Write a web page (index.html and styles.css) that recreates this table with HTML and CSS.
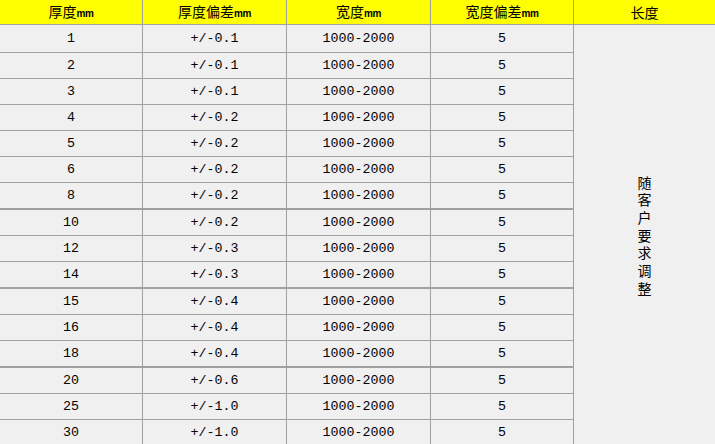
FILE: index.html
```html
<!DOCTYPE html>
<html lang="zh-CN">
<head>
<meta charset="utf-8">
<title>规格表</title>
<link rel="stylesheet" href="styles.css">
</head>
<body>
<table class="spec">
  <colgroup>
    <col class="c1"><col class="c2"><col class="c3"><col class="c4"><col class="c5">
  </colgroup>
  <thead>
    <tr>
      <th>厚度<span class="unit">mm</span></th>
      <th>厚度偏差<span class="unit">mm</span></th>
      <th>宽度<span class="unit">mm</span></th>
      <th>宽度偏差<span class="unit">mm</span></th>
      <th class="last">长度</th>
    </tr>
  </thead>
  <tbody>
    <tr class="first"><td>1</td><td>+/-0.1</td><td>1000-2000</td><td>5</td>
      <td class="merged" rowspan="16"><div class="vtext">随客户要求调整</div></td></tr>
    <tr><td>2</td><td>+/-0.1</td><td>1000-2000</td><td>5</td></tr>
    <tr><td>3</td><td>+/-0.1</td><td>1000-2000</td><td>5</td></tr>
    <tr><td>4</td><td>+/-0.2</td><td>1000-2000</td><td>5</td></tr>
    <tr><td>5</td><td>+/-0.2</td><td>1000-2000</td><td>5</td></tr>
    <tr><td>6</td><td>+/-0.2</td><td>1000-2000</td><td>5</td></tr>
    <tr class="grp"><td>8</td><td>+/-0.2</td><td>1000-2000</td><td>5</td></tr>
    <tr><td>10</td><td>+/-0.2</td><td>1000-2000</td><td>5</td></tr>
    <tr><td>12</td><td>+/-0.3</td><td>1000-2000</td><td>5</td></tr>
    <tr class="grp"><td>14</td><td>+/-0.3</td><td>1000-2000</td><td>5</td></tr>
    <tr><td>15</td><td>+/-0.4</td><td>1000-2000</td><td>5</td></tr>
    <tr><td>16</td><td>+/-0.4</td><td>1000-2000</td><td>5</td></tr>
    <tr class="grp"><td>18</td><td>+/-0.4</td><td>1000-2000</td><td>5</td></tr>
    <tr><td>20</td><td>+/-0.6</td><td>1000-2000</td><td>5</td></tr>
    <tr><td>25</td><td>+/-1.0</td><td>1000-2000</td><td>5</td></tr>
    <tr><td>30</td><td>+/-1.0</td><td>1000-2000</td><td>5</td></tr>
  </tbody>
</table>
</body>
</html>
```
FILE: styles.css
```css
html, body {
  margin: 0;
  padding: 0;
  background: #f0f0f0;
  overflow: hidden;
}

.spec {
  border-collapse: separate;
  border-spacing: 0;
  table-layout: fixed;
  width: 715px;
  font-family: "Liberation Mono", "Noto Sans CJK SC", monospace;
  font-size: 13.3px;
  color: #000;
  background: #f0f0f0;
}

.c1 { width: 143px; }
.c2 { width: 144px; }
.c3 { width: 144px; }
.c4 { width: 143px; }
.c5 { width: 141px; }

.spec th,
.spec td {
  box-sizing: border-box;
  padding: 0;
  text-align: center;
  vertical-align: middle;
  border-right: 1px solid #a0a0a0;
  border-bottom: 1px solid #a0a0a0;
  height: 26px;
  line-height: 16px;
  white-space: nowrap;
}

.spec th {
  background: #ffff00;
  font-family: "Noto Sans CJK SC", sans-serif;
  font-weight: normal;
  font-size: 14px;
  height: 25px;
}

.spec th.last,
.spec td.merged {
  border-right: none;
}

.unit {
  font-family: "Liberation Sans Narrow", "Liberation Sans", sans-serif;
  font-size: 10px;
  font-weight: bold;
  letter-spacing: -0.5px;
}

.spec tr.first td {
  height: 28px;
}

.spec tr.grp td {
  border-bottom-width: 2px;
  height: 27px;
}

.spec td.merged {
  border-bottom: none;
  white-space: normal;
}

.vtext {
  width: 14px;
  margin: 0 auto;
  font-family: "Noto Sans CJK SC", sans-serif;
  font-size: 14px;
  line-height: 17.7px;
  word-break: break-all;
}
```
